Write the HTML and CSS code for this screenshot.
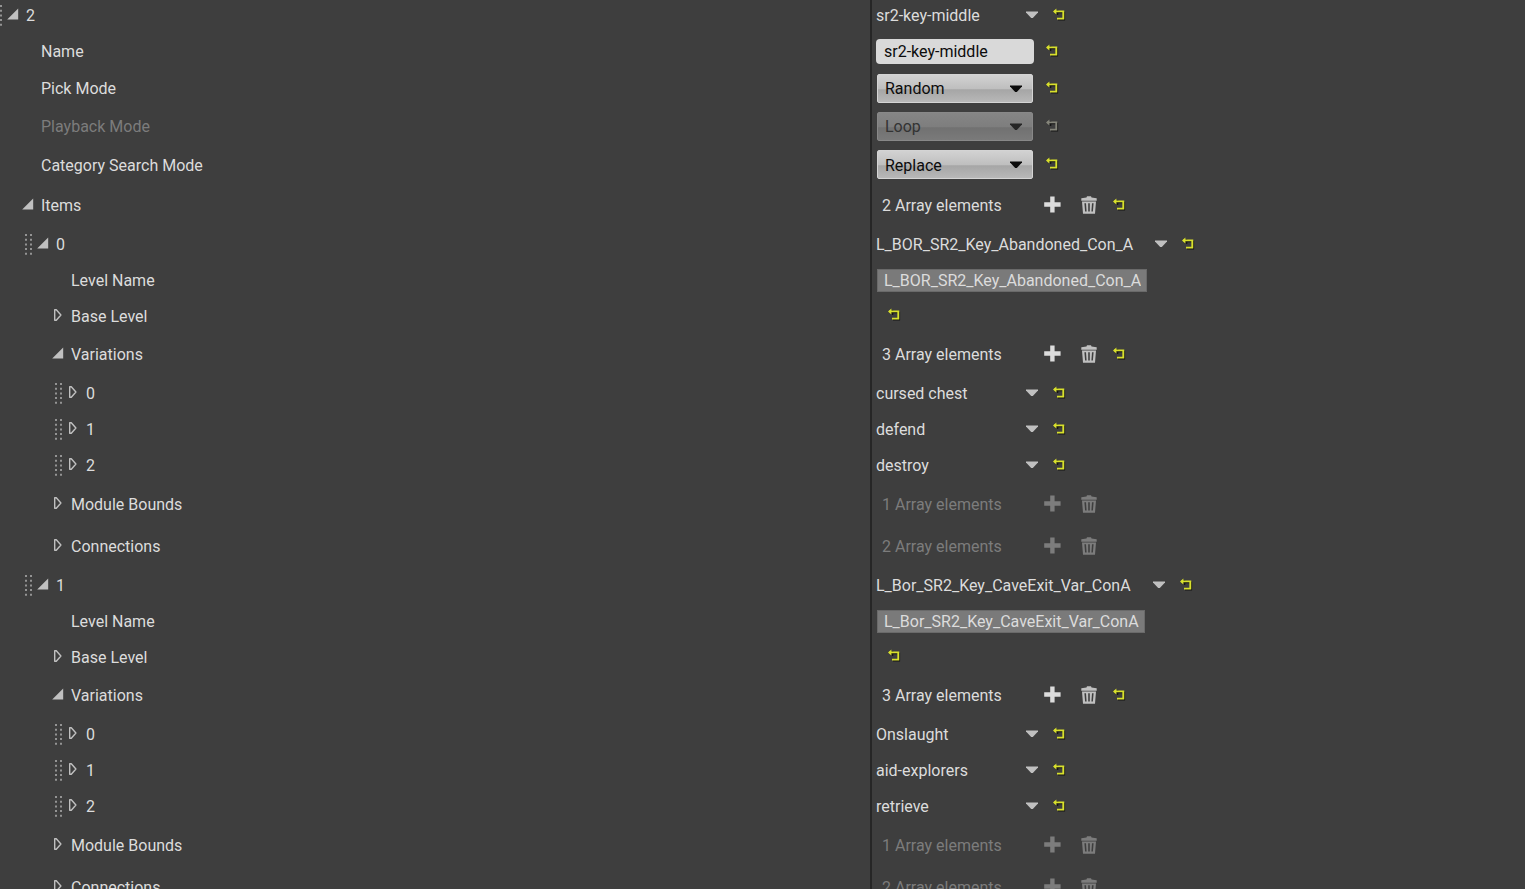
FILE: index.html
```html
<!DOCTYPE html>
<html lang="en">
<head>
    <meta charset="UTF-8">
    <title>Details</title>
    <link rel="stylesheet" href="styles.css">
</head>
<body>
    <svg class="sprite" aria-hidden="true">
        <symbol id="grip" viewBox="0 0 7 21">
            <path d="M0 0h2v2h-2zM5 0h2v2h-2zM0 4.7h2v2h-2zM5 4.7h2v2h-2zM0 9.4h2v2h-2zM5 9.4h2v2h-2zM0 14.1h2v2h-2zM5 14.1h2v2h-2zM0 18.8h2v2h-2zM5 18.8h2v2h-2z"/>
        </symbol>
        <symbol id="open" viewBox="0 0 12 12">
            <path d="M11.2 0.5v11h-11z"/>
        </symbol>
        <symbol id="closed" viewBox="0 0 12 12">
            <path d="M2.7 0.8h1.6l4.6 5.2-4.6 5.2H2.7z" fill="none" stroke="currentColor" stroke-width="1.4" stroke-linejoin="round"/>
        </symbol>
        <symbol id="down" viewBox="0 0 12 8">
            <path d="M0 0.5h12v1L6.8 7H5.2L0 1.5z"/>
        </symbol>
        <symbol id="plus" viewBox="0 0 17 17">
            <path d="M6.2 0.5h4.4v5.8h6v4.4h-6v5.8H6.2v-5.8h-6V6.3h6z"/>
        </symbol>
        <symbol id="trash" viewBox="0 0 16 18">
            <path d="M0.3 2.2 5.5 1.6 6 0.2h4l0.5 1.4 5.2 0.6v2.6H0.3z"/>
            <path fill-rule="evenodd" d="M1 5.4h14l-1 12.3H2zM3.4 7.2l0.7 8.3h1.5L5 7.2zM7.2 7.2v8.3h1.6V7.2zM11 7.2l-0.6 8.3h1.5l0.7-8.3z"/>
        </symbol>
        <symbol id="reset" viewBox="0 0 13 13">
            <path d="M3 4.5h8.3v7.2H5M4.5 2v5" fill="none" stroke="#141414" stroke-width="1.6"/>
            <path d="M1 3.4h9.3v7.2H4" fill="none" stroke="currentColor" stroke-width="1.9"/>
            <path d="M0 3.4 3.4 0.4v6z"/>
        </symbol>
    </svg>

    <main class="tree">
        <div class="row">
            <div class="name level-0">
                <svg class="grip"><use href="#grip"/></svg>
                <button class="expander" aria-label="Collapse 2"><svg><use href="#open"/></svg></button>
                <span>2</span>
            </div>
            <div class="value">
                <span class="summary">sr2-key-middle</span>
                <button class="menu" aria-label="Element menu"><svg><use href="#down"/></svg></button>
                <button class="reset" aria-label="Reset to default"><svg><use href="#reset"/></svg></button>
            </div>
        </div>
        <div class="row">
            <div class="name level-1 leaf"><label for="name">Name</label></div>
            <div class="value">
                <input class="text-box" id="name" type="text" value="sr2-key-middle">
                <button class="reset" aria-label="Reset to default"><svg><use href="#reset"/></svg></button>
            </div>
        </div>
        <div class="row row-enum">
            <div class="name level-1 leaf"><label for="pick-mode">Pick Mode</label></div>
            <div class="value">
                <div class="combo">
                    <select id="pick-mode"><option>Random</option></select>
                    <svg><use href="#down"/></svg>
                </div>
                <button class="reset" aria-label="Reset to default"><svg><use href="#reset"/></svg></button>
            </div>
        </div>
        <div class="row row-enum disabled">
            <div class="name level-1 leaf"><label for="playback-mode">Playback Mode</label></div>
            <div class="value">
                <div class="combo">
                    <select id="playback-mode" disabled><option>Loop</option></select>
                    <svg><use href="#down"/></svg>
                </div>
                <button class="reset" aria-label="Reset to default" disabled><svg><use href="#reset"/></svg></button>
            </div>
        </div>
        <div class="row row-enum row-enum-last">
            <div class="name level-1 leaf"><label for="search-mode">Category Search Mode</label></div>
            <div class="value">
                <div class="combo">
                    <select id="search-mode"><option>Replace</option></select>
                    <svg><use href="#down"/></svg>
                </div>
                <button class="reset" aria-label="Reset to default"><svg><use href="#reset"/></svg></button>
            </div>
        </div>
        <div class="row row-array">
            <div class="name level-1">
                <button class="expander" aria-label="Collapse Items"><svg><use href="#open"/></svg></button>
                <span>Items</span>
            </div>
            <div class="value">
                <span class="count">2 Array elements</span>
                <button class="add" aria-label="Add element"><svg><use href="#plus"/></svg></button>
                <button class="delete" aria-label="Remove all elements"><svg><use href="#trash"/></svg></button>
                <button class="reset" aria-label="Reset to default"><svg><use href="#reset"/></svg></button>
            </div>
        </div>

        <!-- Items[0] -->
        <div class="row">
            <div class="name level-2">
                <svg class="grip"><use href="#grip"/></svg>
                <button class="expander" aria-label="Collapse 0"><svg><use href="#open"/></svg></button>
                <span>0</span>
            </div>
            <div class="value">
                <span class="summary">L_BOR_SR2_Key_Abandoned_Con_A</span>
                <button class="menu" aria-label="Element menu"><svg><use href="#down"/></svg></button>
                <button class="reset" aria-label="Reset to default"><svg><use href="#reset"/></svg></button>
            </div>
        </div>
        <div class="row">
            <div class="name level-3 leaf"><label for="level-name-0">Level Name</label></div>
            <div class="value">
                <input class="read-only" id="level-name-0" type="text" value="L_BOR_SR2_Key_Abandoned_Con_A" readonly>
            </div>
        </div>
        <div class="row row-base">
            <div class="name level-3">
                <button class="expander" aria-label="Expand Base Level"><svg><use href="#closed"/></svg></button>
                <span>Base Level</span>
            </div>
            <div class="value">
                <button class="reset" aria-label="Reset to default"><svg><use href="#reset"/></svg></button>
            </div>
        </div>
        <div class="row row-array">
            <div class="name level-3">
                <button class="expander" aria-label="Collapse Variations"><svg><use href="#open"/></svg></button>
                <span>Variations</span>
            </div>
            <div class="value">
                <span class="count">3 Array elements</span>
                <button class="add" aria-label="Add element"><svg><use href="#plus"/></svg></button>
                <button class="delete" aria-label="Remove all elements"><svg><use href="#trash"/></svg></button>
                <button class="reset" aria-label="Reset to default"><svg><use href="#reset"/></svg></button>
            </div>
        </div>
        <div class="row">
            <div class="name level-4">
                <svg class="grip"><use href="#grip"/></svg>
                <button class="expander" aria-label="Expand 0"><svg><use href="#closed"/></svg></button>
                <span>0</span>
            </div>
            <div class="value">
                <span class="summary">cursed chest</span>
                <button class="menu" aria-label="Element menu"><svg><use href="#down"/></svg></button>
                <button class="reset" aria-label="Reset to default"><svg><use href="#reset"/></svg></button>
            </div>
        </div>
        <div class="row">
            <div class="name level-4">
                <svg class="grip"><use href="#grip"/></svg>
                <button class="expander" aria-label="Expand 1"><svg><use href="#closed"/></svg></button>
                <span>1</span>
            </div>
            <div class="value">
                <span class="summary">defend</span>
                <button class="menu" aria-label="Element menu"><svg><use href="#down"/></svg></button>
                <button class="reset" aria-label="Reset to default"><svg><use href="#reset"/></svg></button>
            </div>
        </div>
        <div class="row">
            <div class="name level-4">
                <svg class="grip"><use href="#grip"/></svg>
                <button class="expander" aria-label="Expand 2"><svg><use href="#closed"/></svg></button>
                <span>2</span>
            </div>
            <div class="value">
                <span class="summary">destroy</span>
                <button class="menu" aria-label="Element menu"><svg><use href="#down"/></svg></button>
                <button class="reset" aria-label="Reset to default"><svg><use href="#reset"/></svg></button>
            </div>
        </div>
        <div class="row row-array">
            <div class="name level-3">
                <button class="expander" aria-label="Expand Module Bounds"><svg><use href="#closed"/></svg></button>
                <span>Module Bounds</span>
            </div>
            <div class="value locked">
                <span class="count">1 Array elements</span>
                <button class="add" aria-label="Add element" disabled><svg><use href="#plus"/></svg></button>
                <button class="delete" aria-label="Remove all elements" disabled><svg><use href="#trash"/></svg></button>
            </div>
        </div>
        <div class="row row-array">
            <div class="name level-3">
                <button class="expander" aria-label="Expand Connections"><svg><use href="#closed"/></svg></button>
                <span>Connections</span>
            </div>
            <div class="value locked">
                <span class="count">2 Array elements</span>
                <button class="add" aria-label="Add element" disabled><svg><use href="#plus"/></svg></button>
                <button class="delete" aria-label="Remove all elements" disabled><svg><use href="#trash"/></svg></button>
            </div>
        </div>

        <!-- Items[1] -->
        <div class="row">
            <div class="name level-2">
                <svg class="grip"><use href="#grip"/></svg>
                <button class="expander" aria-label="Collapse 1"><svg><use href="#open"/></svg></button>
                <span>1</span>
            </div>
            <div class="value">
                <span class="summary">L_Bor_SR2_Key_CaveExit_Var_ConA</span>
                <button class="menu" aria-label="Element menu"><svg><use href="#down"/></svg></button>
                <button class="reset" aria-label="Reset to default"><svg><use href="#reset"/></svg></button>
            </div>
        </div>
        <div class="row">
            <div class="name level-3 leaf"><label for="level-name-1">Level Name</label></div>
            <div class="value">
                <input class="read-only" id="level-name-1" type="text" value="L_Bor_SR2_Key_CaveExit_Var_ConA" readonly>
            </div>
        </div>
        <div class="row row-base">
            <div class="name level-3">
                <button class="expander" aria-label="Expand Base Level"><svg><use href="#closed"/></svg></button>
                <span>Base Level</span>
            </div>
            <div class="value">
                <button class="reset" aria-label="Reset to default"><svg><use href="#reset"/></svg></button>
            </div>
        </div>
        <div class="row row-array">
            <div class="name level-3">
                <button class="expander" aria-label="Collapse Variations"><svg><use href="#open"/></svg></button>
                <span>Variations</span>
            </div>
            <div class="value">
                <span class="count">3 Array elements</span>
                <button class="add" aria-label="Add element"><svg><use href="#plus"/></svg></button>
                <button class="delete" aria-label="Remove all elements"><svg><use href="#trash"/></svg></button>
                <button class="reset" aria-label="Reset to default"><svg><use href="#reset"/></svg></button>
            </div>
        </div>
        <div class="row">
            <div class="name level-4">
                <svg class="grip"><use href="#grip"/></svg>
                <button class="expander" aria-label="Expand 0"><svg><use href="#closed"/></svg></button>
                <span>0</span>
            </div>
            <div class="value">
                <span class="summary">Onslaught</span>
                <button class="menu" aria-label="Element menu"><svg><use href="#down"/></svg></button>
                <button class="reset" aria-label="Reset to default"><svg><use href="#reset"/></svg></button>
            </div>
        </div>
        <div class="row">
            <div class="name level-4">
                <svg class="grip"><use href="#grip"/></svg>
                <button class="expander" aria-label="Expand 1"><svg><use href="#closed"/></svg></button>
                <span>1</span>
            </div>
            <div class="value">
                <span class="summary">aid-explorers</span>
                <button class="menu" aria-label="Element menu"><svg><use href="#down"/></svg></button>
                <button class="reset" aria-label="Reset to default"><svg><use href="#reset"/></svg></button>
            </div>
        </div>
        <div class="row">
            <div class="name level-4">
                <svg class="grip"><use href="#grip"/></svg>
                <button class="expander" aria-label="Expand 2"><svg><use href="#closed"/></svg></button>
                <span>2</span>
            </div>
            <div class="value">
                <span class="summary">retrieve</span>
                <button class="menu" aria-label="Element menu"><svg><use href="#down"/></svg></button>
                <button class="reset" aria-label="Reset to default"><svg><use href="#reset"/></svg></button>
            </div>
        </div>
        <div class="row row-array">
            <div class="name level-3">
                <button class="expander" aria-label="Expand Module Bounds"><svg><use href="#closed"/></svg></button>
                <span>Module Bounds</span>
            </div>
            <div class="value locked">
                <span class="count">1 Array elements</span>
                <button class="add" aria-label="Add element" disabled><svg><use href="#plus"/></svg></button>
                <button class="delete" aria-label="Remove all elements" disabled><svg><use href="#trash"/></svg></button>
            </div>
        </div>
        <div class="row row-array">
            <div class="name level-3">
                <button class="expander" aria-label="Expand Connections"><svg><use href="#closed"/></svg></button>
                <span>Connections</span>
            </div>
            <div class="value locked">
                <span class="count">2 Array elements</span>
                <button class="add" aria-label="Add element" disabled><svg><use href="#plus"/></svg></button>
                <button class="delete" aria-label="Remove all elements" disabled><svg><use href="#trash"/></svg></button>
            </div>
        </div>
    </main>
</body>
</html>
```

FILE: styles.css
```css
:root {
    --bg: #3e3e3e;
    --splitter: #262626;
    --text: #dcdcdc;
    --text-disabled: #7c7c7c;
    --icon: #c0c0c0;
    --reset: #d8e02c;
}

* {
    box-sizing: border-box;
}

body {
    margin: 0;
    height: 100vh;
    overflow: hidden;
    background: var(--bg);
    color: var(--text);
    font-family: Roboto, sans-serif;
    font-size: 16px;
    line-height: 20px;
}

svg {
    display: block;
    fill: currentColor;
}

button {
    display: block;
    flex: none;
    padding: 0;
    border: none;
    background: none;
    color: var(--icon);
}

button svg {
    width: 100%;
    height: 100%;
}

.sprite {
    display: none;
}

/* scrolled slightly past the top of the first row */
.tree {
    margin-top: -3px;
}

.row {
    display: grid;
    grid-template-columns: 57.05% 1fr;
    height: 36px;
    overflow: hidden;
}

.row-enum {
    height: 38px;
}

.row-enum-last {
    height: 39px;
}

.row-base {
    height: 35px;
}

.row-array {
    height: 42px;
}

/* name column */
.name {
    display: flex;
    align-items: center;
    justify-content: flex-start;
    margin-left: -5px;
    white-space: nowrap;
}

.name span,
.name label,
.value > span {
    padding-top: 2px;
}

.level-1 { padding-left: 15px; }
.level-2 { padding-left: 30px; }
.level-3 { padding-left: 45px; }
.level-4 { padding-left: 60px; }

.grip {
    flex: none;
    width: 7px;
    height: 21px;
    margin-right: -7px;
    color: #949494;
}

.expander {
    width: 12px;
    height: 12px;
    margin: 0 7px 2px 12px;
}

.leaf label {
    margin-left: 31px;
}

/* value column */
.value {
    display: flex;
    align-items: center;
    padding-left: 4px;
    border-left: 2px solid var(--splitter);
    white-space: nowrap;
}

.summary {
    min-width: 150px;
    padding-right: 22px;
}

.menu {
    width: 12px;
    height: 8px;
}

.reset {
    width: 13px;
    height: 13px;
    margin: 0 0 2px 12px;
    color: var(--reset);
}

.menu + .reset {
    margin-left: 15px;
}

.delete + .reset {
    margin-left: 16px;
}

.count {
    width: 168px;
    padding-left: 6px;
}

.add {
    width: 17px;
    height: 17px;
    margin-bottom: 2px;
    color: var(--text);
}

.delete {
    width: 16px;
    height: 18px;
    margin-left: 20px;
    color: var(--icon);
}

.text-box {
    width: 158px;
    height: 25px;
    padding: 0 8px;
    border: none;
    border-radius: 4px;
    background: #d9d9d9;
    color: #0c0c0c;
    font: inherit;
}

.combo {
    position: relative;
    width: 158px;
    padding: 0 1px;
}

.combo select {
    display: block;
    width: 100%;
    height: 29px;
    padding: 2px 7px 0;
    appearance: none;
    border: 1px solid #d4d4d4;
    border-radius: 2px;
    background: linear-gradient(#d2d2d2, #bfbfbf 50%, #a6a6a6 55%, #b8b8b8);
    color: #0c0c0c;
    font: inherit;
    opacity: 1;
}

.combo svg {
    position: absolute;
    top: 11px;
    right: 12px;
    width: 12px;
    height: 8px;
    color: #0c0c0c;
    pointer-events: none;
}

.read-only {
    field-sizing: content;
    height: 23px;
    margin-left: 1px;
    padding: 0 5px 0 6px;
    border: 1px solid #6a6a6a;
    background: #7a7a7a;
    color: var(--text);
    font: inherit;
}

/* disabled state */
.disabled .name,
.locked,
.locked button {
    color: var(--text-disabled);
}

.disabled select {
    border-color: #888;
    background: linear-gradient(#858585, #7e7e7e 50%, #717171 55%, #7a7a7a);
    color: #333;
}

.disabled .combo svg {
    color: #262626;
}

.disabled .reset {
    color: #85857a;
}
```
